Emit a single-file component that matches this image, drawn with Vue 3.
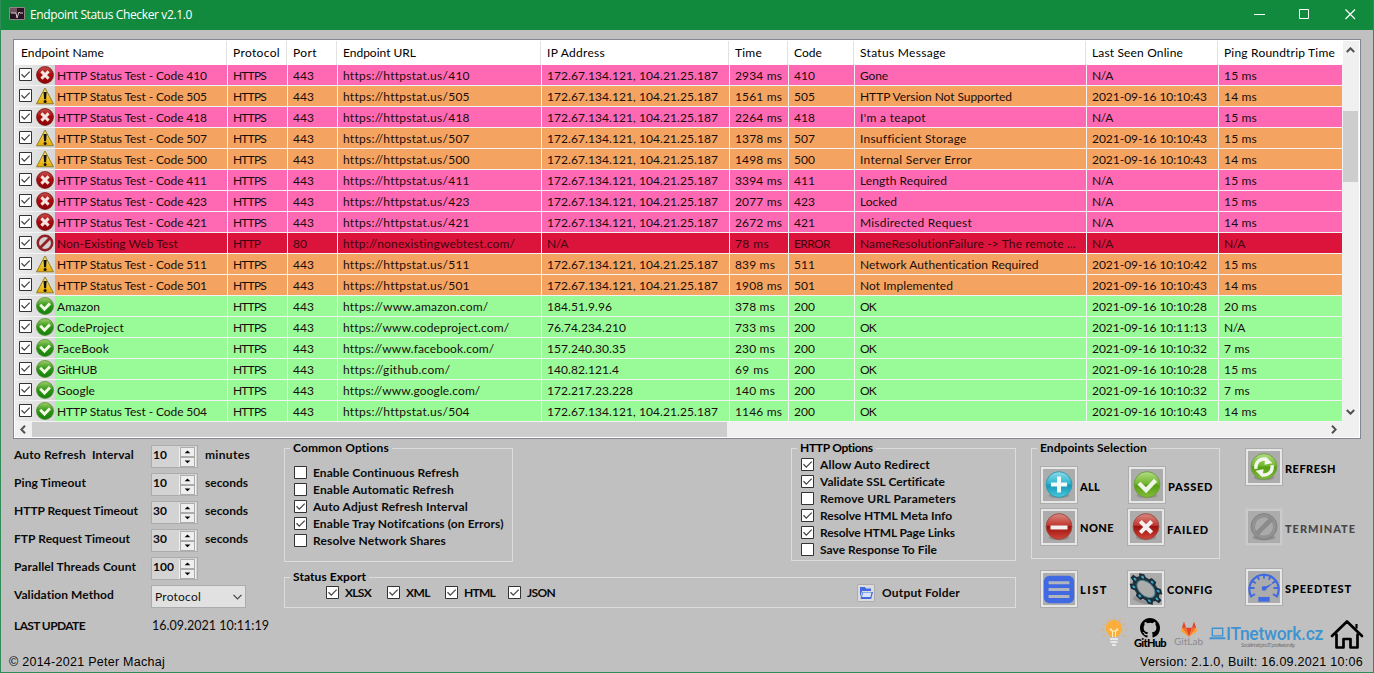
<script setup>
const vFit = {
  mounted(el, { value }) {
    if (!value) return
    const natural = el.getBoundingClientRect().width
    el.style.letterSpacing = (value - natural) / el.textContent.length + 'px'
  }
}

const columns = [
  ['Endpoint Name', 83], ['Protocol', 47], ['Port', 24], ['Endpoint URL', 73], ['IP Address', 58],
  ['Time', 27], ['Code', 28], ['Status Message', 86], ['Last Seen Online', 91], ['Ping Roundtrip Time', 111]
]

const cf = '172.67.134.121, 104.21.25.187'
const day = '2021-09-16 10:10:'
const test = (kind, code, time, message, width, seen, ping, result = code) => ({
  kind,
  cells: [
    ['HTTP Status Test - Code ' + code, 150], ['HTTPS', 33], ['443', 21], ['https://httpstat.us/' + code, 126], [cf, 171],
    [time + ' ms', time > 999 ? 47 : 40], [result, 21], [message, width],
    [seen ? day + seen : 'N/A', seen ? 115 : 21], [ping + ' ms', 33]
  ]
})
const site = (name, nw, url, uw, ip, iw, time, tw, seen, ping, pw) => ({
  kind: 'ok',
  cells: [
    [name, nw], ['HTTPS', 33], ['443', 21], [url, uw], [ip, iw], [time + ' ms', tw], ['200', 21], ['OK', 16],
    [seen, 115], [ping, pw]
  ]
})

const rows = [
  test('fail', '410', 2934, 'Gone', 28, '', 15),
  test('warn', '505', 1561, 'HTTP Version Not Supported', 152, '43', 14),
  test('fail', '418', 2264, "I'm a teapot", 66, '', 15),
  test('warn', '507', 1378, 'Insufficient Storage', 106, '43', 15),
  test('warn', '500', 1498, 'Internal Server Error', 112, '43', 14),
  test('fail', '411', 3394, 'Length Required', 87, '', 15),
  test('fail', '423', 2077, 'Locked', 37, '', 15),
  test('fail', '421', 2672, 'Misdirected Request', 112, '', 14),
  {
    kind: 'error',
    cells: [
      ['Non-Existing Web Test', 121], ['HTTP', 27], ['80', 14], ['http://nonexistingwebtest.com/', 172], ['N/A', 21],
      ['78 ms', 34], ['ERROR', 36], ['NameResolutionFailure -> The remote ...', 216], ['N/A', 21], ['N/A', 21]
    ]
  },
  test('warn', '511', 839, 'Network Authentication Required', 179, '42', 15),
  test('warn', '501', 1908, 'Not Implemented', 93, '43', 14),
  site('Amazon', 43, 'https://www.amazon.com/', 145, '184.51.9.96', 65, 378, 40, day + '28', '20 ms', 33),
  site('CodeProject', 67, 'https://www.codeproject.com/', 166, '76.74.234.210', 79, 733, 40, '2021-09-16 10:11:13', 'N/A', 21),
  site('FaceBook', 52, 'https://www.facebook.com/', 151, '157.240.30.35', 79, 230, 40, day + '32', '7 ms', 26),
  site('GitHUB', 40, 'https://github.com/', 107, '140.82.121.4', 72, 69, 34, day + '28', '15 ms', 33),
  site('Google', 38, 'https://www.google.com/', 137, '172.217.23.228', 86, 140, 40, day + '32', '7 ms', 26),
  test('ok', '504', 1146, 'OK', 16, '43', 14, '200')
]

const settings = [
  ['Auto Refresh  Interval', 120, '10', 'minutes', 45],
  ['Ping Timeout', 72, '10', 'seconds', 43],
  ['HTTP Request Timeout', 124, '30', 'seconds', 43],
  ['FTP Request Timeout', 116, '30', 'seconds', 43],
  ['Parallel Threads Count', 122, '100', '', 0]
]
const common = [
  ['Enable Continuous Refresh', 146, false], ['Enable Automatic Refresh', 141, false],
  ['Auto Adjust Refresh Interval', 155, true], ['Enable Tray Notifcations (on Errors)', 191, true],
  ['Resolve Network Shares', 133, false]
]
const http = [
  ['Allow Auto Redirect', 110, true], ['Validate SSL Certificate', 125, true],
  ['Remove URL Parameters', 136, false], ['Resolve HTML Meta Info', 132, true],
  ['Resolve HTML Page Links', 135, true], ['Save Response To File', 117, false]
]
const exports = [['XLSX', 26], ['XML', 24], ['HTML', 31], ['JSON', 28]]
const ticks = [-150, -120, -90, -60, -30]
const cogs = [0, 45, 90, 135, 180, 225, 270, 315]
const rays = [-120, -90, -60, -30, 0, 30, 60, 90, 120]
</script>

<template>
  <div class="window">
    <svg class="defs" width="0" height="0">
      <defs>
        <linearGradient id="gRed" x2="0" y2="1"><stop offset="0" stop-color="#d98a82" /><stop offset=".45" stop-color="#c03a32" /><stop offset=".5" stop-color="#9c120e" /><stop offset="1" stop-color="#d0463a" /></linearGradient>
        <linearGradient id="gDark" x2="0" y2="1"><stop offset="0" stop-color="#c4524e" /><stop offset=".45" stop-color="#aa0d0f" /><stop offset="1" stop-color="#8c0307" /></linearGradient>
        <linearGradient id="gGreen" x2="0" y2="1"><stop offset="0" stop-color="#b4dc88" /><stop offset=".48" stop-color="#70b52a" /><stop offset=".52" stop-color="#559e10" /><stop offset="1" stop-color="#83bd3a" /></linearGradient>
        <linearGradient id="gOk" x2="0" y2="1"><stop offset="0" stop-color="#a3d06a" /><stop offset=".5" stop-color="#2b9415" /><stop offset="1" stop-color="#16800a" /></linearGradient>
        <linearGradient id="gBlue" x2="0" y2="1"><stop offset="0" stop-color="#8ddae8" /><stop offset=".48" stop-color="#2bb4ce" /><stop offset=".52" stop-color="#1397b6" /><stop offset="1" stop-color="#49c9dd" /></linearGradient>
        <linearGradient id="gYellow" x2="0" y2="1"><stop offset="0" stop-color="#ffe477" /><stop offset="1" stop-color="#e6a900" /></linearGradient>
        <symbol id="fail" viewBox="0 0 18 18"><circle cx="9" cy="9" r="8.4" fill="url(#gDark)" stroke="#790b0b" stroke-width=".8" /><path d="M5.400 5.400l7.200 7.200M12.600 5.400l-7.200 7.200" stroke="#f5e6e2" stroke-width="2.9" /></symbol>
        <symbol id="warn" viewBox="0 0 18 18"><path d="M9 1L17.5 16.800H.5z" fill="url(#gYellow)" stroke="#8f7d25" stroke-width="1" stroke-linejoin="round" /><path d="M7.500 5h3.200l-.6 7.200h-2z" fill="#111" /><circle cx="9.100" cy="14.500" r="1.500" fill="#111" /></symbol>
        <symbol id="error" viewBox="0 0 18 18"><circle cx="9" cy="9" r="7.2" fill="#d4d0d0" stroke="#902226" stroke-width="2.5" /><path d="M4 14L14 4" stroke="#902226" stroke-width="2.8" /></symbol>
        <symbol id="ok" viewBox="0 0 18 18"><circle cx="9" cy="9" r="8.5" fill="url(#gOk)" stroke="#408b25" stroke-width=".7" /><path d="M4.200 7.800l4.300 4.300 5.400-5.600" fill="none" stroke="#f1f7e0" stroke-width="2.900" /></symbol>
        <symbol id="box" viewBox="0 0 13 13"><path d="M.5.5h12v12H.5z" fill="#fff" stroke="#333" /></symbol>
        <symbol id="boxOn" viewBox="0 0 13 13"><path d="M.5.5h12v12H.5z" fill="#fff" stroke="#333" /><path d="M2.5 6.3l2.8 2.9 5.4-5.6" fill="none" stroke="#444" stroke-width="1.25" /></symbol>
      </defs>
    </svg>

    <header class="titlebar">
      <svg class="appicon" width="16" height="14" viewBox="0 0 16 14"><path fill="#281522" stroke="#93838c" d="M.5.5h15v12H.5z" /><path fill="#70535f" d="M1 1h7v5H1z" /><path d="M2 6h5l1 5 2-6 1 1h3" stroke="#d9c9cf" fill="none" /></svg>
      <span v-fit="162" class="title">Endpoint Status Checker v2.1.0</span>
      <svg class="controls" width="104" height="14" viewBox="0 0 104 14" fill="none" stroke="#fff"><path d="M0 7.5h11" /><path d="M45.500 2.500h9v9h-9z" /><path d="M91.500 2.500l9.500 9.500M101 2.500l-9.500 9.500" stroke-width="1.2" /></svg>
    </header>

    <section class="list">
      <div class="table">
        <div class="grid head">
          <div v-for="c in columns" :key="c[0]" class="cell"><span v-fit="c[1]">{{ c[0] }}</span></div>
        </div>
        <div v-for="(r, i) in rows" :key="i" class="grid row" :class="r.kind">
          <div v-for="(c, j) in r.cells" :key="j" class="cell" :class="{ name: j === 0 }">
            <div v-if="j === 0" class="marks">
              <svg width="13" height="13"><use href="#boxOn" /></svg>
              <svg width="18" height="18"><use :href="'#' + r.kind" /></svg>
            </div>
            <span v-fit="c[1]">{{ c[0] }}</span>
          </div>
        </div>
      </div>
      <div class="vbar">
        <svg width="9" height="6" viewBox="0 0 9 6"><path d="M.8 5l3.700-3.700L8.200 5" /></svg>
        <div class="vthumb"></div>
        <svg class="down" width="9" height="6" viewBox="0 0 9 6"><path d="M.8 1l3.700 3.700L8.200 1" /></svg>
      </div>
      <div class="hbar">
        <svg width="6" height="9" viewBox="0 0 6 9"><path d="M5 .8L1.300 4.500 5 8.200" /></svg>
        <div class="hthumb"></div>
        <svg class="right" width="6" height="9" viewBox="0 0 6 9"><path d="M1 .8l3.700 3.700L1 8.200" /></svg>
      </div>
    </section>

    <section class="bottom">
      <div class="settings">
        <div v-for="s in settings" :key="s[0]" class="setting">
          <div class="label"><span v-fit="s[1]">{{ s[0] }}</span></div>
          <div class="spin">
            <span v-fit="s[2].length * 7">{{ s[2] }}</span>
            <div class="arrows">
              <svg width="15" height="10" viewBox="0 0 15 10"><path d="M4 6.500h7L7.500 3z" /></svg>
              <svg width="15" height="10" viewBox="0 0 15 10"><path d="M4 3h7L7.500 6.500z" /></svg>
            </div>
          </div>
          <span v-if="s[3]" v-fit="s[4]" class="unit">{{ s[3] }}</span>
        </div>
        <div class="setting">
          <div class="label"><span v-fit="100">Validation Method</span></div>
          <div class="combo"><span v-fit="46">Protocol</span><svg width="9" height="6" viewBox="0 0 9 6"><path d="M.5.8l4 4 4-4" fill="none" stroke="#444" stroke-width="1.200" /></svg></div>
        </div>
        <div class="setting last">
          <div class="label"><span v-fit="71">LAST UPDATE</span></div>
          <span v-fit="117" class="stamp">16.09.2021 10:11:19</span>
        </div>
      </div>

      <div class="rest">
        <div class="panels">
          <div class="middle">
            <div class="pair">
              <div class="group common">
                <div class="legend"><span v-fit="96">Common Options</span></div>
                <div v-for="o in common" :key="o[0]" class="check"><svg width="13" height="13"><use :href="o[2] ? '#boxOn' : '#box'" /></svg><span v-fit="o[1]">{{ o[0] }}</span></div>
              </div>
              <div class="group http">
                <div class="legend"><span v-fit="73">HTTP Options</span></div>
                <div v-for="o in http" :key="o[0]" class="check"><svg width="13" height="13"><use :href="o[2] ? '#boxOn' : '#box'" /></svg><span v-fit="o[1]">{{ o[0] }}</span></div>
              </div>
            </div>
            <div class="group export">
              <div class="legend"><span v-fit="73">Status Export</span></div>
              <div class="formats">
                <div v-for="e in exports" :key="e[0]" class="check"><svg width="13" height="13"><use href="#boxOn" /></svg><span v-fit="e[1]">{{ e[0] }}</span></div>
                <div class="folder">
                  <svg width="18" height="18" viewBox="0 0 18 18"><path fill="#dcdcdc" stroke="#adadad" d="M.5.5h17v17H.5z" /><path fill="#4169e1" d="M3 3h5l1 1.500h5V7H5L3 13zM5.500 8H16l-1.800 7H3.500z" /><path fill="#dbe3f8" d="M6 8.500h8.500l-1 4.500H5z" /></svg>
                  <span v-fit="78">Output Folder</span>
                </div>
              </div>
            </div>
          </div>

          <div class="selection">
            <div class="group endpoints">
              <div class="legend"><span v-fit="107">Endpoints Selection</span></div>
              <div class="buttons">
                <div class="action"><svg class="btn" viewBox="0 0 38 38"><ellipse cx="19" cy="30" rx="11" ry="3" fill="#777" opacity=".5" /><circle cx="19" cy="18.500" r="13.600" fill="url(#gBlue)" stroke="#3298a8" /><path d="M19 10v17M10.500 18.500h17" stroke="#f3f8f8" stroke-width="4.200" /></svg><span v-fit="20">ALL</span></div>
                <div class="action"><svg class="btn" viewBox="0 0 38 38"><ellipse cx="19" cy="30" rx="11" ry="3" fill="#777" opacity=".5" /><circle cx="19" cy="18.500" r="13.600" fill="url(#gGreen)" stroke="#6f9d3e" /><path d="M10.500 17l7.500 7.500 10-10.500" fill="none" stroke="#f1f4ea" stroke-width="4.400" /></svg><span v-fit="45">PASSED</span></div>
                <div class="action none"><svg class="btn" viewBox="0 0 38 38"><ellipse cx="19" cy="30" rx="11" ry="3" fill="#777" opacity=".5" /><circle cx="19" cy="18.500" r="13.600" fill="url(#gRed)" stroke="#9c4840" /><path d="M10 19.500h18" stroke="#f4f0f0" stroke-width="4.200" /></svg><span v-fit="34">NONE</span></div>
                <div class="action failed"><svg class="btn" viewBox="0 0 38 38"><ellipse cx="19" cy="30" rx="11" ry="3" fill="#777" opacity=".5" /><circle cx="19" cy="18.500" r="13.600" fill="url(#gRed)" stroke="#9c4840" /><path d="M13 13l12 12M25 13L13 25" stroke="#f4f0f0" stroke-width="4.300" /></svg><span v-fit="42">FAILED</span></div>
              </div>
            </div>
            <div class="buttons extra">
              <div class="action"><svg class="btn" viewBox="0 0 38 38"><rect x="3" y="5" width="32" height="29" rx="6" fill="#4169e1" /><path d="M8 12.500h22M8 19.500h22M8 27h22" stroke="#b2b5bb" stroke-width="3.200" /></svg><span v-fit="28">LIST</span></div>
              <div class="action left"><svg class="btn" viewBox="0 0 38 38"><path d="M6 28q12 8 20 3" fill="none" stroke="#777" stroke-width="4" opacity=".5" /><g transform="translate(19 19) rotate(42) scale(1.150 .72)"><ellipse rx="12" ry="12" fill="none" stroke="#22363f" stroke-width="4.500" /><path v-for="a in cogs" :key="a" d="M-3-12.500h6l-1-4h-4z" :transform="'rotate(' + a + ')'" fill="#2b4b58" stroke="#172c35" stroke-width="2" /><circle v-for="a in cogs" :key="'l' + a" cy="-13.500" r="1.600" :transform="'rotate(' + a + ')'" fill="#3aa4c4" /><ellipse rx="9.700" ry="9.700" fill="none" stroke="#4a8496" /></g></svg><span v-fit="46">CONFIG</span></div>
            </div>
          </div>

          <div class="actions">
            <div class="action"><svg class="btn" viewBox="0 0 38 38"><ellipse cx="19" cy="30" rx="11" ry="3" fill="#777" opacity=".5" /><circle cx="19" cy="18.500" r="13.600" fill="url(#gGreen)" stroke="#6f9d3e" /><path d="M10.700 21a8.300 8.300 0 0 1 11.300-9.700M27.300 17a8.300 8.300 0 0 1-11.300 9.700" fill="none" stroke="#f3f6ec" stroke-width="3.600" /><path d="M20.500 8l7.500 7-8.500 1.500zM17.500 30L10 23l8.500-1.500z" fill="#f3f6ec" /></svg><span v-fit="51">REFRESH</span></div>
            <div class="action disabled"><svg class="btn" viewBox="0 0 38 38"><ellipse cx="19" cy="30" rx="12" ry="3" fill="#8f8f8f" /><circle cx="19" cy="18.500" r="11.500" fill="#aaa" stroke="#929292" stroke-width="4" /><path d="M11 26.500l16-16" stroke="#8b8b8b" stroke-width="5" /><circle cx="19" cy="18.500" r="13.700" fill="none" stroke="#777" stroke-width=".8" /></svg><span v-fit="71">TERMINATE</span></div>
            <div class="action"><svg class="btn" viewBox="0 0 38 38"><path d="M6 30A15.500 15.500 0 1 1 32 30" fill="none" stroke="#4169e1" stroke-width="2.200" /><path v-for="t in ticks" :key="t" d="M34 20h-5" :transform="'rotate(' + t + ' 19 20)'" stroke="#4169e1" stroke-width="2" /><path d="M3 20h6M29 20h6M5 29l4.500-2.500M33 29l-4.500-2.500" stroke="#4169e1" stroke-width="2" /><path d="M29 14.500l-8 7-1.500-2.500z" fill="#4169e1" /><circle cx="19" cy="20.500" r="2.500" fill="#4169e1" /><rect x="13" y="29.500" width="12" height="5" fill="#4169e1" /></svg><span v-fit="67">SPEEDTEST</span></div>
          </div>
        </div>

        <div class="logos">
          <svg width="30" height="31" viewBox="0 0 30 31"><g fill="none" stroke="#dfae74" stroke-width="1.200"><path v-for="a in rays" :key="a" d="M15 2.500v-2.500" :transform="'rotate(' + a + ' 15 13)'" /></g><path d="M11 20q0-1.500-2.500-3.500a8.300 8.300 0 1 1 13 0Q19 18.500 19 20z" fill="#fbae3c" /><path d="M13.500 20v-6M16.500 20v-6M13.500 14q-3 0-2.500-2t2.500 2h3q3 0 2.500-2t-2.500 2" fill="none" stroke="#fff0bd" /><path d="M11 22h8M11.500 25h7M13 28h4" stroke="#e8e8e8" stroke-width="2" /></svg>
          <div class="brand github">
            <svg width="20" height="20" viewBox="0 0 16 16"><path fill="#000" d="M8 0C3.580 0 0 3.580 0 8c0 3.540 2.290 6.530 5.470 7.590.4.070.55-.17.55-.38 0-.19-.01-.82-.01-1.490-2.010.37-2.530-.49-2.690-.94-.09-.23-.48-.94-.82-1.130-.28-.15-.68-.52-.01-.53.63-.01 1.080.58 1.230.82.72 1.210 1.870.87 2.330.66.07-.52.28-.87.51-1.070-1.780-.2-3.640-.89-3.640-3.950 0-.87.31-1.590.82-2.150-.08-.2-.36-1.020.08-2.120 0 0 .67-.21 2.200.82a7.600 7.600 0 0 1 4 0c1.530-1.040 2.200-.82 2.200-.82.44 1.100.16 1.920.08 2.120.51.56.82 1.270.82 2.150 0 3.070-1.870 3.750-3.650 3.950.29.25.54.73.54 1.480 0 1.070-.01 1.930-.01 2.200 0 .21.15.46.55.38A8.010 8.010 0 0 0 16 8c0-4.420-3.580-8-8-8z" /></svg>
            <span v-fit="32">GitHub</span>
          </div>
          <div class="brand gitlab">
            <svg width="16" height="15" viewBox="0 0 16 15"><path fill="#e24329" d="M8 15L5 5.700h6z" /><path fill="#fc6d26" d="M8 15L5 5.700H.9zM8 15l3-9.300h4.100z" /><path fill="#fca326" d="M.9 5.700L0 8.500c-.1.300 0 .5.200.7L8 15zM15.100 5.700L16 8.500c.1.300 0 .5-.2.700L8 15z" /><path fill="#e24329" d="M.9 5.700H5L3.200.3c-.1-.3-.4-.3-.5 0zM15.100 5.700H11L12.800.3c.1-.3.4-.3.500 0z" /></svg>
            <span v-fit="29">GitLab</span>
          </div>
          <div class="itn">
            <div class="itmain"><svg width="17" height="13" viewBox="0 0 18 13"><path d="M3.500 1h11v8h-11z" fill="none" stroke="#3d94d1" stroke-width="1.500" /><path d="M1 10.500h16l.8 2H.2z" fill="#3d94d1" /></svg><span v-fit="97">ITnetwork.cz</span></div>
            <span v-fit="58" class="tag">Sociální síť pro IT profesionály</span>
          </div>
          <svg class="house" width="34" height="31" viewBox="0 0 34 31"><path d="M2 17L17 2.500 32 17M6.500 15.500V28.500h7v-8.500h7v8.500h7V15.500" fill="none" stroke="#000" stroke-width="2.700" stroke-linecap="round" stroke-linejoin="round" /><path d="M26.500 9.500V5" stroke="#000" stroke-width="2.200" /></svg>
        </div>
      </div>
    </section>

    <footer class="footer"><span v-fit="156">© 2014-2021 Peter Machaj</span><span v-fit="223">Version: 2.1.0, Built: 16.09.2021 10:06</span></footer>
  </div>
</template>

<style>
html, body { margin: 0; overflow: hidden; background: #c0c0c0; }
</style>

<style scoped>
* { box-sizing: border-box; }
span { display: inline-block; white-space: pre; flex: none; }
svg { display: block; flex: none; }
.defs { position: absolute; }
.window { width: 1374px; height: 673px; background: #c0c0c0; border: solid #2f8b57; border-width: 0 1px 1px; font: 12px/16px Lato, "Noto Sans", sans-serif; color: #0b0b0b; display: flex; flex-direction: column; overflow: hidden; }
.titlebar { height: 30px; flex: none; margin: 0 -1px; background: #118a3e; color: #fff; display: flex; align-items: center; padding: 0 16px 2px 9px; }
.title { font: 12px/16px "Open Sans", "Noto Sans", sans-serif; margin-left: 5px; padding-top: 2px; }
.controls { margin-left: auto; }
.list { margin: 9px 0 0 12px; width: 1348px; height: 400px; flex: none; border: 1px solid #828790; padding: 1px; background: #fff; display: grid; grid-template-columns: 1328px 16px; grid-template-rows: 381px 15px; }
.grid { display: grid; grid-template-columns: 213px 60px 50px 204px 188px 59px 66px 232px 132px 124px; }
.cell { display: flex; align-items: center; padding-left: 5px; min-width: 0; border-right: 1px solid #f3f3f3; }
.head { height: 24px; color: #000; background: #fff; margin-left: -1px; }
.head .cell { padding-left: 6px; border-color: #e2e2e2; }
.head .cell:first-child { padding-left: 7px; }
.head .cell:last-child { border: 0; }
.row { height: 21px; border-bottom: 1px solid #f3f3f3; }
.row .cell > span { padding-top: 2px; }
.row .cell.name { padding: 0; }
.marks { width: 40px; height: 20px; margin-right: 2px; padding-left: 4px; display: flex; align-items: center; gap: 4px; background: linear-gradient(90deg, #ececec, #d6d6d6); }
.marks svg:first-child { margin-bottom: 2px; }
.fail { background: #ff69b4; }
.warn { background: #f4a460; }
.ok { background: #98fb98; }
.row.fail, .row.warn, .row.ok { color: #1b0d0b; }
.error { background: #dc143c; color: #3f0610; }
.vbar, .hbar { background: #f0f0f0; display: flex; align-items: center; }
.vbar { flex-direction: column; padding: 6px 1px 7px 0; }
.vbar path, .hbar path { fill: none; stroke: #505050; stroke-width: 2; }
.vthumb { width: 15px; height: 71px; margin-top: 58px; background: #cdcdcd; }
.down { margin-top: auto; }
.hbar { grid-column: 1 / 3; padding-left: 5px; }
.hthumb { height: 15px; width: 695px; margin-left: 6px; background: #cdcdcd; }
.right { margin-left: auto; margin-right: 22px; }
.bottom { height: 212px; flex: none; margin-top: 1px; display: flex; font-weight: 700; }
.settings { width: 283px; flex: none; padding: 5px 0 0 13px; }
.setting { height: 23px; margin-bottom: 5px; display: flex; align-items: flex-start; }
.label { width: 137px; flex: none; padding-top: 2px; }
.spin { width: 47px; height: 23px; border: 1px solid #acacac; background: #d3d3d3; padding: 1px 1px 0 1px; display: flex; justify-content: space-between; }
.arrows { display: flex; flex-direction: column; background: #f0f0f0; padding: 0 1px; height: 20px; }
.arrows svg { border: 1px solid #acacac; background: #eee; }
.unit { margin: 2px 0 0 7px; }
.combo { width: 95px; height: 23px; border: 1px solid #acacac; background: #e1e1e1; padding: 1px 3px 0 3px; display: flex; align-items: center; justify-content: space-between; font-weight: 400; color: #111; }
.last { margin-top: 10px; align-items: center; height: 16px; }
.last .label { padding-top: 0; }
.stamp { font-weight: 400; font-size: 12.500px; margin-left: 1px; }
.rest { flex: 1; display: flex; flex-direction: column; }
.panels { display: flex; height: 176px; }
.middle { width: 732px; padding-top: 8px; }
.pair { display: flex; justify-content: space-between; height: 129px; align-items: flex-start; }
.group { border: 1px solid #dcdcdc; }
.legend { width: max-content; height: 16px; margin: -9px 0 0 5px; padding: 0 3px; background: #c0c0c0; color: #000; }
.common { width: 229px; height: 114px; }
.http { width: 225px; height: 113px; }
.check { display: flex; align-items: center; height: 17px; gap: 6px; margin-left: 9px; }
.common .legend { margin-bottom: 8px; }
.http .legend { margin-bottom: 0; }
.check svg { margin-bottom: 1px; }
.export { height: 31px; }
.export .legend { margin-bottom: -1px; }
.formats { display: flex; align-items: center; padding-left: 41px; }
.formats .check { margin: 0; width: 61px; }
.formats .check:nth-child(2) { width: 58px; }
.formats .check:nth-child(3) { width: 63px; }
.formats .check:nth-child(4) { width: 62px; }
.folder { display: flex; align-items: center; gap: 7px; margin-left: 287px; height: 17px; }
.selection { width: 189px; margin-left: 15px; padding-top: 8px; }
.endpoints { height: 111px; }
.buttons { display: grid; grid-template-columns: 88px 92px; row-gap: 4px; padding: 10px 0 0 8px; }
.extra { padding: 11px 0 0 9px; }
.action { display: flex; align-items: center; gap: 2px; font: 900 11px/14px Lato, "Noto Sans", sans-serif; color: #000; height: 38px; }
.action span { padding-top: 3px; margin-right: -4px; }
.btn { width: 38px; height: 38px; background: #acacac; border: 1px solid #adadad; box-shadow: inset 0 0 0 2px #e6e6e6; }
.none span { padding-top: 1px; }
.extra span { padding-top: 2px; }
.failed, .left { margin-left: -1px; }
.failed span { padding-top: 6px; }
.actions { margin-left: 25px; padding-top: 8px; display: flex; flex-direction: column; gap: 22px; }
.disabled { color: #474747; }
.disabled .btn { border-color: #c4c4c4; box-shadow: inset 0 0 0 2px #cacaca; }
.logos { display: flex; height: 36px; padding-left: 815px; align-items: flex-start; padding-top: 1px; }
.brand { display: flex; flex-direction: column; align-items: center; }
.github { margin: 1px 0 0 5px; font: 900 11px/11px Lato, sans-serif; color: #000; }
.github span { margin-top: -1px; }
.gitlab { margin: 5px 0 0 8px; font: 400 10px/11px Lato, sans-serif; color: #8b8b91; }
.gitlab span { margin-top: -1px; }
.itn { margin: 9px 0 0 6px; display: flex; flex-direction: column; }
.itmain { display: flex; align-items: center; color: #3d94d1; font: 500 17.500px/16px Roboto, sans-serif; height: 15px; }
.tag { font: 5.500px/6px "Noto Sans", sans-serif; color: #777; margin: 1px 0 0 32px; }
.house { margin: 2px 0 0 7px; }
.footer { display: flex; justify-content: space-between; padding: 2px 10px 0 8px; font: 12.500px/16px "Liberation Sans", sans-serif; color: #000; }
</style>
